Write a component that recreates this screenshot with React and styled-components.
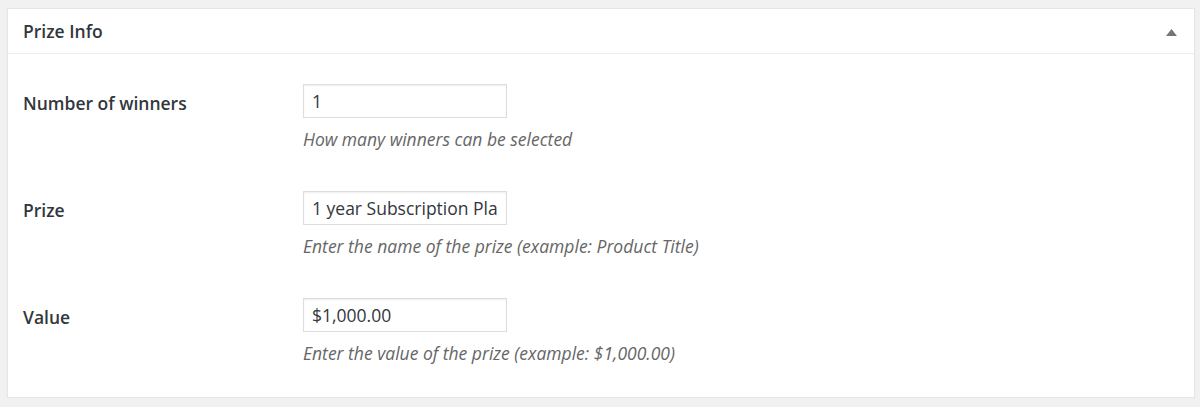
import React from 'react'
import styled, { createGlobalStyle } from 'styled-components'

const GlobalStyle = createGlobalStyle`
  html, body {
    margin: 0;
    padding: 0;
    background: #f1f1f1;
    font-family: "Open Sans", "Liberation Sans", sans-serif;
    color: #23282d;
  }
`

const fields = [
  { label: 'Number of winners', value: '1', help: 'How many winners can be selected' },
  { label: 'Prize', value: '1 year Subscription Plan', help: 'Enter the name of the prize (example: Product Title)' },
  { label: 'Value', value: '$1,000.00', help: 'Enter the value of the prize (example: $1,000.00)' },
]

const Page = styled.div`
  padding: 8px 5px 0 7px;
`

const Postbox = styled.section`
  background: #fff;
  border: 1px solid #e5e5e5;
  box-shadow: 0 1px 1px rgba(0, 0, 0, 0.04);
`

const Header = styled.header`
  display: flex;
  align-items: center;
  justify-content: space-between;
  height: 44px;
  padding: 0 17px 0 15px;
  border-bottom: 1px solid #eee;
`

const Title = styled.h2`
  margin: 0;
  font-size: 17.5px;
  font-weight: 600;
  line-height: 22px;
  color: #32373c;
`

const Toggle = styled.svg`
  width: 11px;
  height: 7px;
  margin-top: 3px;
  fill: #72777c;
`

const Body = styled.div`
  display: grid;
  grid-template-columns: 280px 1fr;
  row-gap: 41px;
  padding: 30px 15px 33px;
`

const Label = styled.label`
  padding-top: 8px;
  font-size: 17.5px;
  font-weight: 600;
  line-height: 22px;
  color: #32373c;
`

const Field = styled.div`
  display: flex;
  flex-direction: column;
  align-items: flex-start;
`

const Input = styled.input`
  box-sizing: border-box;
  width: 204px;
  height: 34px;
  padding: 0 8px;
  border: 1px solid #ddd;
  border-radius: 0;
  box-shadow: inset 0 1px 2px rgba(0, 0, 0, 0.07);
  background: #fff;
  color: #32373c;
  font-family: inherit;
  font-size: 17.5px;
  outline: none;
`

const Help = styled.p`
  margin: 10px 0 0;
  font-size: 17.5px;
  font-style: italic;
  line-height: 22px;
  color: #666;
`

const App = () => (
  <Page>
    <GlobalStyle />
    <Postbox>
      <Header>
        <Title>Prize Info</Title>
        <Toggle viewBox="0 0 11 7">
          <polygon points="5.5,0 11,7 0,7" />
        </Toggle>
      </Header>
      <Body>
        {fields.map((f, i) =>
          <React.Fragment key={i}>
            <Label>{f.label}</Label>
            <Field>
              <Input defaultValue={f.value} readOnly />
              <Help>{f.help}</Help>
            </Field>
          </React.Fragment>
        )}
      </Body>
    </Postbox>
  </Page>
)

export default App
